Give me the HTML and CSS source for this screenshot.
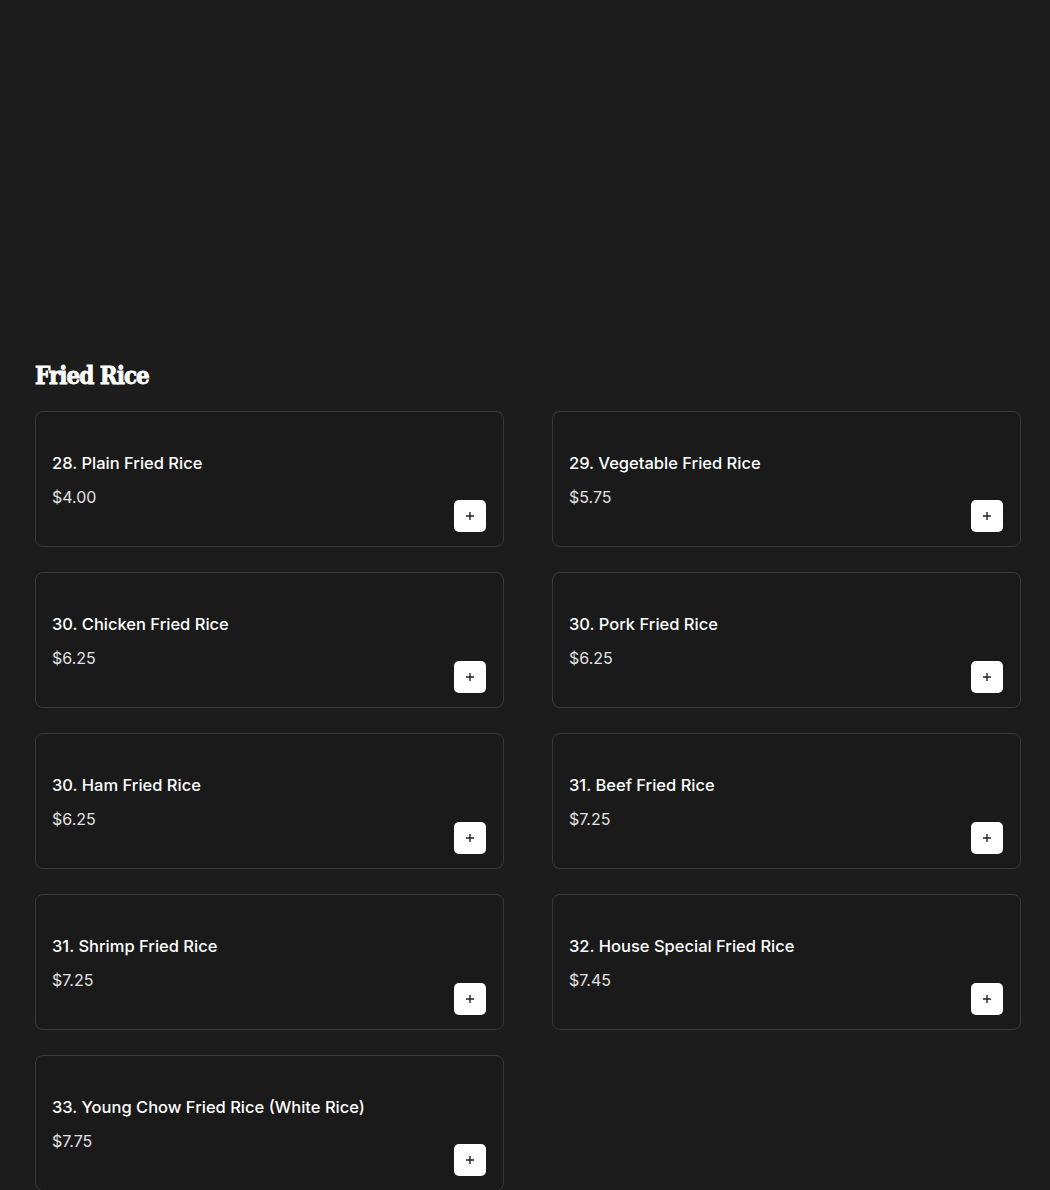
FILE: index.html
```html
<!DOCTYPE html>
<html>
<head>
<meta charset="utf-8">
<link rel="stylesheet" href="styles.css">
</head>
<body>
<main class="page">
  <section class="category">
    <h2 class="category-title">Fried Rice</h2>
    <div class="grid">
      <div class="card"><div class="info"><div class="name">28. Plain Fried Rice</div><div class="price">$4.00</div></div><button class="add"><svg viewBox="0 0 12 12" width="12" height="12"><path d="M6 2v8M2 6h8" stroke="#222" stroke-width="1.4"/></svg></button></div>
      <div class="card"><div class="info"><div class="name">29. Vegetable Fried Rice</div><div class="price">$5.75</div></div><button class="add"><svg viewBox="0 0 12 12" width="12" height="12"><path d="M6 2v8M2 6h8" stroke="#222" stroke-width="1.4"/></svg></button></div>
      <div class="card"><div class="info"><div class="name">30. Chicken Fried Rice</div><div class="price">$6.25</div></div><button class="add"><svg viewBox="0 0 12 12" width="12" height="12"><path d="M6 2v8M2 6h8" stroke="#222" stroke-width="1.4"/></svg></button></div>
      <div class="card"><div class="info"><div class="name">30. Pork Fried Rice</div><div class="price">$6.25</div></div><button class="add"><svg viewBox="0 0 12 12" width="12" height="12"><path d="M6 2v8M2 6h8" stroke="#222" stroke-width="1.4"/></svg></button></div>
      <div class="card"><div class="info"><div class="name">30. Ham Fried Rice</div><div class="price">$6.25</div></div><button class="add"><svg viewBox="0 0 12 12" width="12" height="12"><path d="M6 2v8M2 6h8" stroke="#222" stroke-width="1.4"/></svg></button></div>
      <div class="card"><div class="info"><div class="name">31. Beef Fried Rice</div><div class="price">$7.25</div></div><button class="add"><svg viewBox="0 0 12 12" width="12" height="12"><path d="M6 2v8M2 6h8" stroke="#222" stroke-width="1.4"/></svg></button></div>
      <div class="card"><div class="info"><div class="name">31. Shrimp Fried Rice</div><div class="price">$7.25</div></div><button class="add"><svg viewBox="0 0 12 12" width="12" height="12"><path d="M6 2v8M2 6h8" stroke="#222" stroke-width="1.4"/></svg></button></div>
      <div class="card"><div class="info"><div class="name">32. House Special Fried Rice</div><div class="price">$7.45</div></div><button class="add"><svg viewBox="0 0 12 12" width="12" height="12"><path d="M6 2v8M2 6h8" stroke="#222" stroke-width="1.4"/></svg></button></div>
      <div class="card"><div class="info"><div class="name">33. Young Chow Fried Rice (White Rice)</div><div class="price">$7.75</div></div><button class="add"><svg viewBox="0 0 12 12" width="12" height="12"><path d="M6 2v8M2 6h8" stroke="#222" stroke-width="1.4"/></svg></button></div>
    </div>
  </section>
</main>
</body>
</html>
```

FILE: styles.css
```css
html, body {
  margin: 0;
  padding: 0;
  background: #1c1c1c;
  color: #fff;
  font-family: "Inter", "Noto Sans", sans-serif;
}
.page {
  padding: 359px 29px 0 35px;
}
.category-title {
  margin: 0 0 19px 0;
  font-family: "DejaVu Serif Condensed", "DejaVu Serif", serif;
  font-weight: 700;
  font-size: 24px;
  line-height: 33px;
  color: #fff;
  letter-spacing: -1px;
  -webkit-text-stroke: 0.8px #fff;
}
.grid {
  display: grid;
  grid-template-columns: 469px 469px;
  column-gap: 48px;
  row-gap: 25px;
}
.card {
  box-sizing: border-box;
  height: 136px;
  border: 1px solid #3a3a3a;
  border-radius: 8px;
  background: #1a1a1a;
  padding: 40px 17px 14px 16px;
  display: flex;
  justify-content: space-between;
}
.info {
  align-self: flex-start;
}
.name {
  font-size: 16.5px;
  line-height: 22px;
  font-weight: 500;
  color: #fff;
}
.price {
  margin-top: 13px;
  font-size: 16px;
  line-height: 20px;
  font-weight: 400;
  color: #e2e2e2;
}
.add {
  align-self: flex-end;
  width: 32px;
  height: 32px;
  border: none;
  border-radius: 5px;
  background: #fff;
  padding: 0;
  display: flex;
  align-items: center;
  justify-content: center;
}
```
